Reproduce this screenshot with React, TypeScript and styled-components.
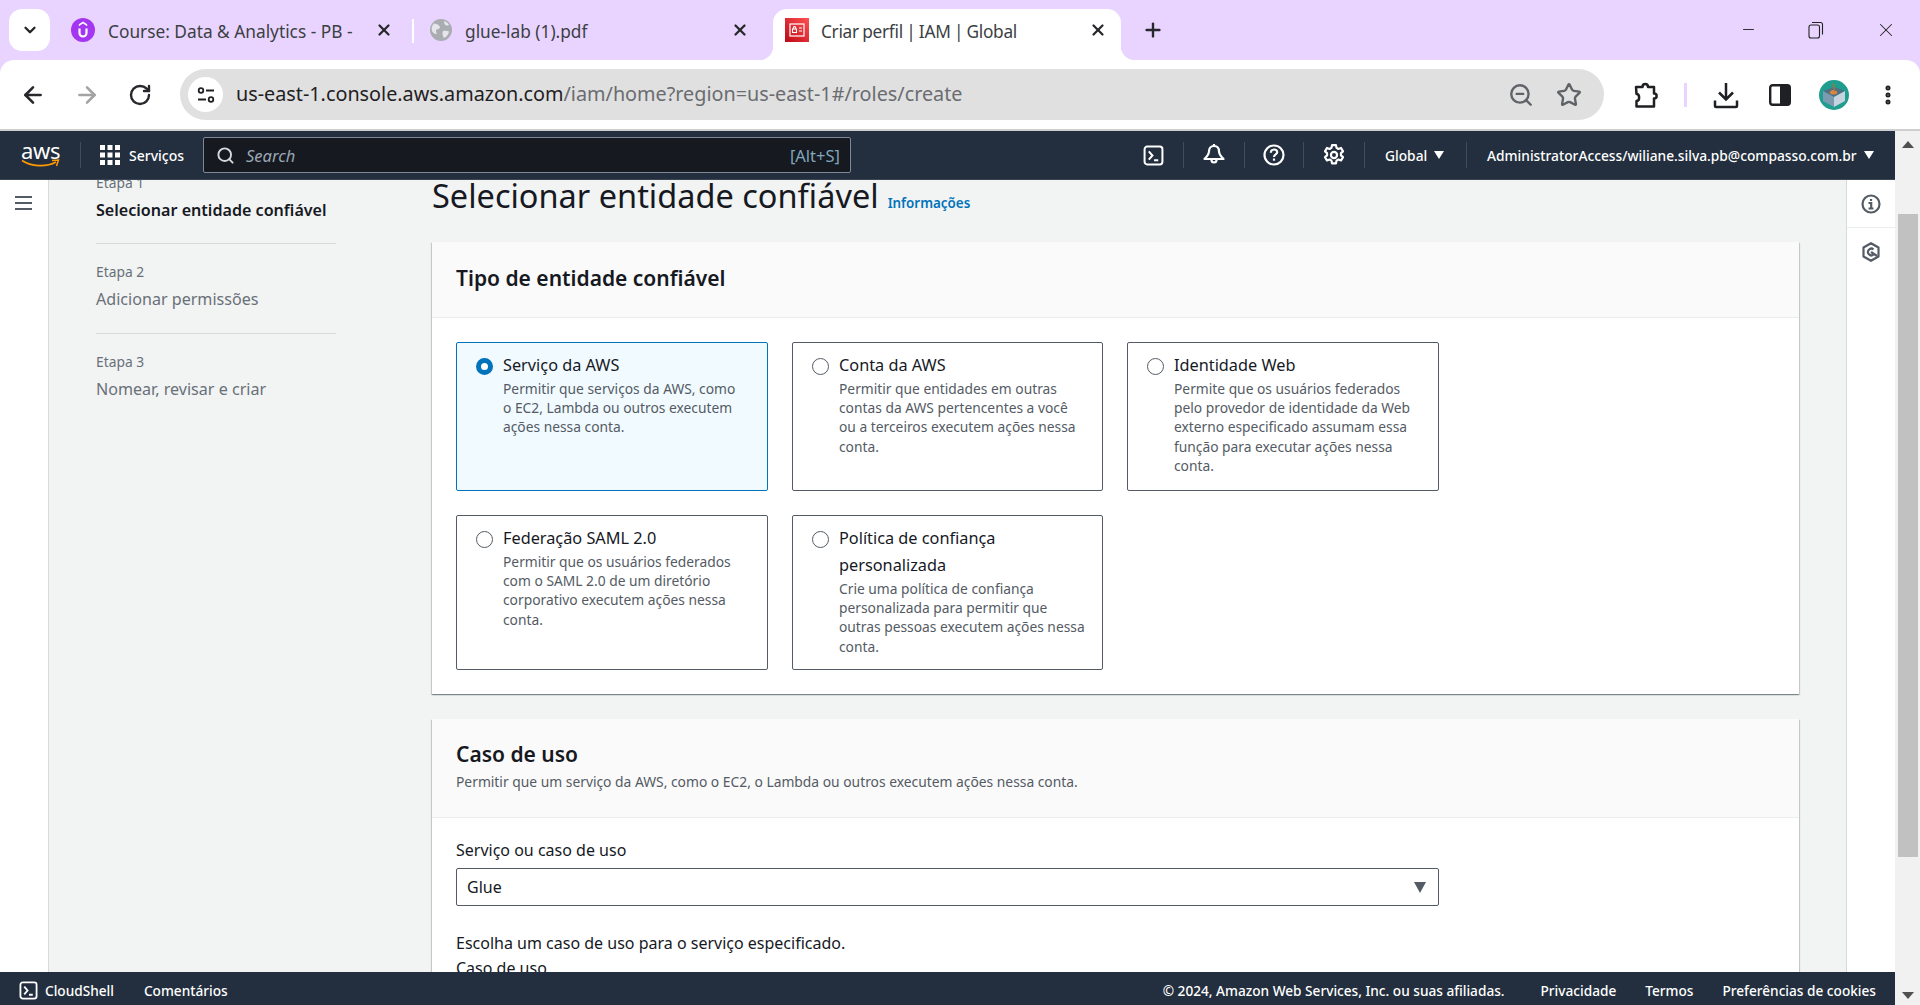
import styled, { createGlobalStyle } from "styled-components";
import { ArrowLeft, ArrowRight, RotateCw, ZoomOut, Star, X, Plus, ChevronDown, Search, Minus, EllipsisVertical } from "lucide-react";

const GlobalStyle = createGlobalStyle`
  html, body {
    margin: 0;
    padding: 0;
    overflow: hidden;
    background: #fff;
  }
  * {
    box-sizing: border-box;
  }
`;

const FONT = `"Noto Sans", "Open Sans", sans-serif`;

const Window = styled.div`
  width: 1920px;
  height: 1005px;
  display: flex;
  flex-direction: column;
  overflow: hidden;
  background: #e8d4ff;
  font-family: ${FONT};
  color: #16191f;
`;

const TabStrip = styled.div`
  height: 60px;
  flex: none;
  display: flex;
  align-items: flex-end;
  padding-left: 9px;
`;

const TabSearchButton = styled.div`
  width: 41px;
  height: 42px;
  margin-bottom: 9px;
  margin-right: 9px;
  background: #fff;
  border-radius: 13px;
  display: flex;
  align-items: center;
  justify-content: center;
`;

const Tab = styled.div<{ $active?: boolean; $width: number; $padLeft: number; $padRight: number }>`
  position: relative;
  width: ${(p) => p.$width}px;
  height: 51px;
  flex: none;
  display: flex;
  align-items: center;
  padding: 0 ${(p) => p.$padRight}px 9px ${(p) => p.$padLeft}px;
  background: ${(p) => (p.$active ? "#fff" : "transparent")};
  border-radius: 14px 14px 0 0;
  font-size: 17.3px;
  color: #3c3f43;

  ${(p) =>
    p.$active
      ? `
    &::before, &::after {
      content: "";
      position: absolute;
      bottom: 0;
      width: 14px;
      height: 14px;
      background: radial-gradient(circle at 0 0, transparent 14px, #fff 14.5px);
    }
    &::before { left: -14px; }
    &::after { right: -14px; background: radial-gradient(circle at 100% 0, transparent 14px, #fff 14.5px); }
  `
      : ""}
`;

const TabTitle = styled.span<{ $gap: number; $tight?: boolean }>`
  flex: 1;
  margin-left: ${(p) => p.$gap}px;
  margin-top: 2px;
  white-space: nowrap;
  overflow: hidden;
  ${(p) => (p.$tight ? "letter-spacing: -0.3px; word-spacing: -0.8px;" : "")}
`;

const TabSeparator = styled.div`
  width: 2px;
  height: 24px;
  flex: none;
  margin-bottom: 17px;
  background: #fff;
`;

const NewTab = styled.div`
  margin-left: 21px;
  height: 51px;
  padding-bottom: 9px;
  display: flex;
  align-items: center;
  color: #26282b;
`;

const WindowControls = styled.div`
  margin-left: auto;
  height: 60px;
  display: flex;
  align-items: center;
  padding-right: 23px;
  gap: 51px;
  padding-bottom: 1px;
  color: #222;
`;

const Toolbar = styled.div`
  height: 69px;
  flex: none;
  display: flex;
  align-items: center;
  background: #fff;
  border-radius: 14px 14px 0 0;
`;

const NavButtons = styled.div`
  width: 180px;
  flex: none;
  display: flex;
  align-items: center;
  padding-left: 20px;
  gap: 28px;
  color: #26282b;
`;

const AddressBar = styled.div`
  width: 1424px;
  height: 51px;
  flex: none;
  display: flex;
  align-items: center;
  padding: 0 22px 0 8px;
  background: #e0e0e0;
  border-radius: 26px;
`;

const SiteInfo = styled.div`
  width: 35px;
  height: 35px;
  flex: none;
  border-radius: 50%;
  background: #fff;
  display: flex;
  align-items: center;
  justify-content: center;
`;

const Url = styled.div`
  margin-left: 13px;
  margin-bottom: 2px;
  flex: 1;
  font-size: 19.8px;
  color: #6a6c70;
  white-space: nowrap;
`;

const UrlHost = styled.span`
  color: #1f2023;
`;

const AddressIcons = styled.div`
  display: flex;
  align-items: center;
  gap: 22px;
  color: #5f6368;
`;

const ToolbarActions = styled.div`
  flex: 1;
  display: flex;
  align-items: center;
  color: #1f2023;
  padding-left: 29px;
`;

const ToolbarSep = styled.div`
  width: 3px;
  height: 24px;
  margin: 0 25px 0 25px;
  background: #e8d4ff;
`;

const PanelSlot = styled.div`
  margin-left: 29px;
  display: flex;
`;

const Avatar = styled.div`
  width: 30px;
  height: 30px;
  margin-left: 28px;
  margin-right: 27px;
  border-radius: 50%;
  overflow: hidden;
  flex: none;
`;

const ChromeLine = styled.div`
  height: 2px;
  flex: none;
  background: #cfcfcf;
`;

const Viewport = styled.div`
  flex: 1;
  min-height: 0;
  display: flex;
`;

const Page = styled.div`
  flex: 1;
  min-width: 0;
  display: flex;
  flex-direction: column;
  background: #f2f3f3;
`;

const TopNav = styled.div`
  height: 49px;
  flex: none;
  display: flex;
  align-items: center;
  background: #232f3e;
  border-bottom: 1px solid #3c4754;
  color: #fff;
  font-size: 14px;
  font-weight: 500;
  white-space: nowrap;
`;

const LogoLink = styled.div`
  width: 80px;
  flex: none;
  display: flex;
  flex-direction: column;
  align-items: flex-start;
  padding-left: 21px;
`;

const LogoText = styled.span`
  font-size: 22px;
  line-height: 17px;
  letter-spacing: -0.3px;
  color: #fff;
  font-weight: 400;
`;

const NavDivider = styled.div`
  width: 1px;
  height: 26px;
  flex: none;
  background: #414d5c;
`;

const ServicesButton = styled.div`
  width: 122px;
  flex: none;
  display: flex;
  align-items: center;
  padding-left: 19px;
  gap: 9px;
`;

const SearchBox = styled.div`
  width: 648px;
  height: 36px;
  flex: none;
  display: flex;
  align-items: center;
  padding: 0 10px 0 12px;
  background: #16191f;
  border: 1px solid #7d8998;
  border-radius: 2px;
`;

const SearchHint = styled.span`
  margin-left: 11px;
  flex: 1;
  font-style: italic;
  font-size: 16.5px;
  font-weight: 400;
  color: #9ba7b6;
`;

const Shortcut = styled.span`
  font-size: 16.5px;
  font-weight: 400;
  color: #7fa6bd;
`;

const NavSpacer = styled.div`
  flex: 1;
`;

const NavIconCell = styled.div`
  width: 60px;
  flex: none;
  display: flex;
  align-items: center;
  justify-content: center;
`;

const NavIconCellNarrow = styled(NavIconCell)`
  width: 58px;
`;

const NavMenu = styled.div<{ $width: number }>`
  width: ${(p) => p.$width}px;
  flex: none;
  display: flex;
  align-items: center;
  padding-left: 20px;
  gap: 7px;
  font-size: 13.75px;
`;

const Caret = styled.span`
  width: 0;
  height: 0;
  border-left: 5.5px solid transparent;
  border-right: 5.5px solid transparent;
  border-top: 8px solid #fff;
`;

const Body = styled.div`
  flex: 1;
  min-height: 0;
  display: flex;
  overflow: hidden;
`;

const SideRail = styled.div`
  width: 49px;
  flex: none;
  background: #fff;
  border-right: 1px solid #d5dbdb;
  padding: 16px 0 0 15px;
`;

const HamburgerLine = styled.div`
  width: 17px;
  height: 2px;
  margin-bottom: 4px;
  background: #545b64;
`;

const Steps = styled.nav`
  width: 383px;
  flex: none;
  padding-left: 47px;
  margin-top: -6px;
`;

const Step = styled.div<{ $last?: boolean }>`
  width: 240px;
  height: 90px;
  border-bottom: ${(p) => (p.$last ? "none" : "1px solid #d5dbdb")};
  padding-top: 19px;
`;

const StepFirst = styled(Step)`
  height: 70px;
  padding-top: 0;
`;

const StepLabel = styled.div`
  font-size: 13.8px;
  line-height: 18px;
  color: #687078;
`;

const StepName = styled.div<{ $current?: boolean }>`
  margin-top: 7px;
  font-size: 16.1px;
  line-height: 22px;
  font-weight: ${(p) => (p.$current ? 600 : 400)};
  color: ${(p) => (p.$current ? "#16191f" : "#687078")};
  white-space: nowrap;
`;

const Main = styled.main`
  width: 1367px;
  flex: none;
  margin-top: -8px;
`;

const TitleRow = styled.div`
  height: 70px;
  display: flex;
  align-items: baseline;
  gap: 9px;
  padding-top: 2px;
`;

const PageTitle = styled.h1`
  margin: 0;
  font-size: 32.5px;
  line-height: 44px;
  font-weight: 400;
  color: #16191f;
  white-space: nowrap;
`;

const InfoLink = styled.a`
  font-size: 13.4px;
  font-weight: 600;
  color: #0073bb;
`;

const Card = styled.section`
  background: #fff;
  box-shadow: 0 1px 1px 0 rgba(0, 28, 36, 0.3), 1px 1px 1px 0 rgba(0, 28, 36, 0.15), -1px 1px 1px 0 rgba(0, 28, 36, 0.15);
  margin-bottom: 25px;
`;

const CardHeader = styled.header<{ $height: number; $lift: number }>`
  height: ${(p) => p.$height}px;
  background: #fafafa;
  border-bottom: 1px solid #eaeded;
  padding: 0 24px ${(p) => p.$lift}px;
  display: flex;
  flex-direction: column;
  justify-content: center;
`;

const CardTitle = styled.h2`
  margin: 0;
  font-size: 21px;
  line-height: 28px;
  font-weight: 600;
  color: #16191f;
`;

const CardSubtitle = styled.p`
  margin: 4px 0 0;
  font-size: 13.84px;
  line-height: 20px;
  color: #545b64;
`;

const CardBody = styled.div`
  padding: 24px;
`;

const FieldsBody = styled(CardBody)`
  padding-top: 21px;
`;

const TileGrid = styled.div`
  display: grid;
  grid-template-columns: 312px 311px 312px;
  grid-template-rows: 149px 155px;
  gap: 24px;
`;

const Tile = styled.div<{ $selected?: boolean }>`
  display: flex;
  padding: 9px 8px 8px 19px;
  border: 1px solid ${(p) => (p.$selected ? "#0073bb" : "#545b64")};
  border-radius: 2px;
  background: ${(p) => (p.$selected ? "#f1faff" : "#fff")};
`;

const Radio = styled.span<{ $selected?: boolean }>`
  width: 17px;
  height: 17px;
  flex: none;
  margin-top: 6px;
  border-radius: 50%;
  border: ${(p) => (p.$selected ? "5px solid #0073bb" : "1.5px solid #545b64")};
  background: #fff;
`;

const TileText = styled.div`
  margin-left: 10px;
  min-width: 0;
`;

const TileTitle = styled.div`
  font-size: 16.3px;
  line-height: 27px;
  color: #16191f;
  white-space: pre-line;
`;

const TileDescription = styled.div`
  font-size: 13.8px;
  line-height: 19.2px;
  color: #545b64;
  white-space: pre;
`;

const FieldLabel = styled.div`
  font-size: 16px;
  line-height: 22px;
  color: #16191f;
`;

const Select = styled.div`
  width: 983px;
  height: 38px;
  margin-top: 7px;
  display: flex;
  align-items: center;
  justify-content: space-between;
  padding: 0 12px 0 10px;
  border: 1px solid #545b64;
  border-radius: 2px;
  font-size: 16px;
  background: #fff;
`;

const SelectCaret = styled.span`
  width: 0;
  height: 0;
  border-left: 6.5px solid transparent;
  border-right: 6.5px solid transparent;
  border-top: 11px solid #545b64;
`;

const FieldHelp = styled.div`
  margin-top: 26px;
  font-size: 16px;
  line-height: 22px;
`;

const FieldSub = styled.div`
  margin-top: 3px;
  font-size: 16px;
  line-height: 22px;
`;

const ToolsPanel = styled.aside`
  width: 49px;
  flex: none;
  margin-left: auto;
  background: #fff;
  border-left: 1px solid #d5dbdb;
`;

const ToolCell = styled.div`
  height: 48px;
  display: flex;
  align-items: center;
  justify-content: center;
  border-bottom: 1px solid #eaeded;
`;

const ToolCellPlain = styled(ToolCell)`
  border-bottom: none;
`;

const Footer = styled.footer`
  height: 33px;
  flex: none;
  display: flex;
  align-items: center;
  position: relative;
  z-index: 1;
  padding: 3px 19px 0;
  background: #232f3e;
  color: #fff;
  font-size: 13.65px;
  font-weight: 500;
  white-space: nowrap;
`;

const FooterLeft = styled.div`
  display: flex;
  align-items: center;
  gap: 7px;
`;

const FooterLink = styled.span<{ $gap: number }>`
  margin-left: ${(p) => p.$gap}px;
`;

const FooterRight = styled.div`
  margin-left: auto;
  display: flex;
  align-items: center;
`;

const Scrollbar = styled.div`
  width: 25px;
  flex: none;
  display: flex;
  flex-direction: column;
  align-items: center;
  background: #f1f1f1;
`;

const ScrollArrow = styled.span<{ $down?: boolean }>`
  width: 0;
  height: 0;
  flex: none;
  border-left: 6px solid transparent;
  border-right: 6px solid transparent;
  ${(p) => (p.$down ? "border-top: 7px solid #505050;" : "border-bottom: 7px solid #505050;")}
`;

const ScrollUpSlot = styled.div`
  height: 83px;
  flex: none;
  display: flex;
  justify-content: center;
  padding-top: 10px;
`;

const ScrollThumb = styled.div`
  width: 20px;
  height: 643px;
  flex: none;
  background: #c1c1c1;
`;

const ScrollDownSlot = styled.div`
  flex: 1;
  display: flex;
  align-items: flex-end;
  padding-bottom: 6px;
`;

function UdemyIcon() {
  return (
    <svg width="24" height="24" viewBox="0 0 24 24">
      <circle cx="12" cy="12" r="12" fill="#a435f0" />
      <path d="M8.5 10.5v4.500a3.500 3.500 0 0 0 7 0v-4.500" fill="none" stroke="#fff" strokeWidth="2.200" />
      <path d="M12 3.600 7.800 6.200v2L12 5.600l4.200 2.600v-2z" fill="#fff" />
    </svg>
  );
}

function GlobeIcon() {
  return (
    <svg width="22" height="22" viewBox="0 0 22 22">
      <circle cx="11" cy="11" r="11" fill="#a9adb1" />
      <path d="M4 4.500c3 .3 5 1.500 6 3.500 0 2-2 2-3.500 2.500-1 1-.5 3 .5 4.500-2 .5-4-1-5-3C1 9 2 6.500 4 4.500zM14 2c2 .5 4 2 5 4-1.500 1-3.500 .5-4.500-1zM13 12c2-.5 4-.5 6 .5-.5 3-2.500 5.500-5 6.500-1.500-2-2-5-1-7z" fill="#f1eef6" opacity="0.85" />
    </svg>
  );
}

function IamIcon() {
  return (
    <svg width="24" height="24" viewBox="0 0 24 24">
      <defs>
        <linearGradient id="iamGrad" x1="0" y1="1" x2="1" y2="0">
          <stop offset="0" stopColor="#bd0816" />
          <stop offset="1" stopColor="#ff5252" />
        </linearGradient>
      </defs>
      <rect width="24" height="24" fill="url(#iamGrad)" />
      <rect x="5" y="6" width="14" height="12" fill="none" stroke="#fff" strokeWidth="1.200" />
      <rect x="7.500" y="11" width="4" height="3.500" fill="none" stroke="#fff" strokeWidth="1.100" />
      <path d="M8.300 11V9.800a1.200 1.200 0 0 1 2.400 0V11M14 10h3M14 13h3" fill="none" stroke="#fff" strokeWidth="1.100" />
    </svg>
  );
}

function SiteSettingsIcon() {
  return (
    <svg width="20" height="20" viewBox="0 0 20 20" fill="none" stroke="#1f2023" strokeWidth="1.800">
      <circle cx="5" cy="5.500" r="2.300" />
      <path d="M10 5.500h8M2 14.500h8" />
      <circle cx="15" cy="14.500" r="2.300" />
    </svg>
  );
}

function RestoreIcon() {
  return (
    <svg width="16" height="18" viewBox="0 0 16 18" fill="none" stroke="#222" strokeWidth="1.100">
      <rect x="1" y="4" width="10.500" height="13" rx="2" />
      <path d="M4 1.500h8.500a2 2 0 0 1 2 2v10" />
    </svg>
  );
}

function ExtensionIcon() {
  return (
    <svg width="26" height="28" viewBox="0 0 26 28" fill="none" stroke="#1f2023" strokeWidth="2.500" strokeLinejoin="round">
      <path d="M3 6h6.500c0-4 5.500-4 5.500 0h6v6.500c3.500 0 3.500 5 0 5V25.500H3.500V20c3.500 0 3.500-7 0-7z" />
    </svg>
  );
}

function DownloadIcon() {
  return (
    <svg width="28" height="28" viewBox="0 0 28 28" fill="none" stroke="#1f2023" strokeWidth="2.500">
      <path d="M14 2v16M7 11.500l7 7 7-7" />
      <path d="M3 19.500v5.500a1 1 0 0 0 1 1h20a1 1 0 0 0 1-1v-5.500" />
    </svg>
  );
}

function SidePanelIcon() {
  return (
    <svg width="22" height="24" viewBox="0 0 22 24">
      <rect x="1.200" y="2.200" width="19.600" height="19.600" rx="2.500" fill="none" stroke="#1f2023" strokeWidth="2.400" />
      <rect x="11" y="2" width="10" height="20" rx="1.500" fill="#1f2023" />
    </svg>
  );
}

function ProfilePicture() {
  return (
    <svg width="30" height="30" viewBox="0 0 30 30">
      <rect width="30" height="30" fill="#1f9e8f" />
      <path d="M4 11 15 7l11 4-11 6z" fill="#4f6f85" />
      <path d="M15 17l11-6v10l-11 6z" fill="#c6d3de" />
      <path d="M4 11l11 6v10L4 21z" fill="#7d9bb0" />
      <path d="M10.500 13c1-2.500 3-3.500 5-2.500 2 0 3.500 1 2.500 3-2 1.500-5 1.500-7.500-.5z" fill="#d8873d" />
      <path d="M14.500 3.500l1 8" stroke="#b96f2e" strokeWidth="1.400" />
    </svg>
  );
}

function AwsSmile() {
  return (
    <svg width="39" height="9" viewBox="0 0 39 9" fill="none">
      <path d="M1 1.500C10 7.500 25 8.500 35 3" stroke="#f90" strokeWidth="1.700" />
      <path d="M31 1.500 37.500 1 35.500 7" stroke="#f90" strokeWidth="1.500" />
    </svg>
  );
}

function GridIcon() {
  return (
    <svg width="20" height="20" viewBox="0 0 20 20" fill="#fff">
      {[0, 7.5, 15].map((y) =>
        [0, 7.5, 15].map((x) => <rect key={`${x}-${y}`} x={x} y={y} width="5" height="5" />)
      )}
    </svg>
  );
}

function ShellIcon({ size }: { size: number }) {
  return (
    <svg width={size} height={size} viewBox="0 0 20 20" fill="none" stroke="#fff" strokeWidth="1.900">
      <rect x="1.500" y="1.500" width="17" height="17" rx="2.500" />
      <path d="M5.500 6l3.500 4-3.500 4M10.500 14.500h4" />
    </svg>
  );
}

function BellIcon() {
  return (
    <svg width="22" height="24" viewBox="0 0 22 24" fill="none" stroke="#fff" strokeWidth="2.200">
      <path d="M11 3c3.500 0 5 2.500 5 5.500 0 3 2.500 5.500 4.500 7.500h-19C3.500 14 6 11.500 6 8.500 6 5.500 7.500 3 11 3z" strokeLinejoin="round" />
      <path d="M8.500 17a2.500 2.500 0 0 0 5 0" />
      <path d="M11 1v2" />
    </svg>
  );
}

function HelpIcon() {
  return (
    <svg width="22" height="22" viewBox="0 0 22 22" fill="none" stroke="#fff" strokeWidth="2.200">
      <circle cx="11" cy="11" r="9.500" />
      <path d="M7.800 8.800c0-4.300 6.400-4.300 6.400-.5 0 2.200-3.200 2.200-3.200 4.700" />
      <path d="M11 14.500v2.200" />
    </svg>
  );
}

function GearIcon() {
  return (
    <svg width="22" height="22" viewBox="0 0 20 20" fill="none" stroke="#fff" strokeWidth="2" strokeLinejoin="round">
      <path d="M8.200 1h3.600l.5 2.500 1.700 1 2.400-.9 1.800 3.100-1.900 1.600v2l1.900 1.600-1.800 3.100-2.400-.9-1.700 1-.5 2.500H8.200l-.5-2.500-1.700-1-2.400.9-1.800-3.100 1.900-1.600v-2L1.800 6.700l1.800-3.100 2.400.9 1.700-1z" />
      <circle cx="10" cy="10" r="2.800" />
    </svg>
  );
}

function InfoIcon() {
  return (
    <svg width="20" height="20" viewBox="0 0 20 20" fill="none" stroke="#545b64" strokeWidth="2.200">
      <circle cx="10" cy="10" r="8.500" />
      <path d="M7.500 9h2.700v5.500M7.500 14.500h5M10 5v2" />
    </svg>
  );
}

function HexIcon() {
  return (
    <svg width="18" height="20" viewBox="0 0 18 20" fill="none" stroke="#545b64" strokeWidth="2.200" strokeLinejoin="round">
      <path d="M9 1.200 16.500 5.500v9L9 18.800 1.500 14.500v-9z" />
      <path d="M11.500 7.500a3.300 3.300 0 1 0 0 5" />
      <path d="M9 10l6 4" />
    </svg>
  );
}

const tiles = [
  {
    title: "Serviço da AWS",
    text: "Permitir que serviços da AWS, como\no EC2, Lambda ou outros executem\nações nessa conta.",
    selected: true,
  },
  {
    title: "Conta da AWS",
    text: "Permitir que entidades em outras\ncontas da AWS pertencentes a você\nou a terceiros executem ações nessa\nconta.",
  },
  {
    title: "Identidade Web",
    text: "Permite que os usuários federados\npelo provedor de identidade da Web\nexterno especificado assumam essa\nfunção para executar ações nessa\nconta.",
  },
  {
    title: "Federação SAML 2.0",
    text: "Permitir que os usuários federados\ncom o SAML 2.0 de um diretório\ncorporativo executem ações nessa\nconta.",
  },
  {
    title: "Política de confiança\npersonalizada",
    text: "Crie uma política de confiança\npersonalizada para permitir que\noutras pessoas executem ações nessa\nconta.",
  },
];

export default function App() {
  return (
    <>
      <GlobalStyle />
      <Window>
        <TabStrip>
          <TabSearchButton>
            <ChevronDown size={18} strokeWidth={3} color="#222" />
          </TabSearchButton>
          <Tab $width={353} $padLeft={12} $padRight={19}>
            <UdemyIcon />
            <TabTitle $gap={13}>Course: Data &amp; Analytics - PB -</TabTitle>
            <X size={18} strokeWidth={3} color="#26282b" />
          </Tab>
          <TabSeparator />
          <Tab $width={359} $padLeft={16} $padRight={24}>
            <GlobeIcon />
            <TabTitle $gap={13}>glue-lab (1).pdf</TabTitle>
            <X size={18} strokeWidth={3} color="#26282b" />
          </Tab>
          <Tab $active $width={348} $padLeft={12} $padRight={14}>
            <IamIcon />
            <TabTitle $gap={12} $tight>Criar perfil | IAM | Global</TabTitle>
            <X size={18} strokeWidth={3} color="#26282b" />
          </Tab>
          <NewTab>
            <Plus size={22} strokeWidth={2.6} />
          </NewTab>
          <WindowControls>
            <Minus size={17} strokeWidth={1.3} />
            <RestoreIcon />
            <X size={22} strokeWidth={1.1} />
          </WindowControls>
        </TabStrip>
        <Toolbar>
          <NavButtons>
            <ArrowLeft size={26} strokeWidth={2.4} />
            <ArrowRight size={26} strokeWidth={2.4} color="#a3a3a3" />
            <RotateCw size={24} strokeWidth={2.4} />
          </NavButtons>
          <AddressBar>
            <SiteInfo>
              <SiteSettingsIcon />
            </SiteInfo>
            <Url>
              <UrlHost>us-east-1.console.aws.amazon.com</UrlHost>/iam/home?region=us-east-1#/roles/create
            </Url>
            <AddressIcons>
              <ZoomOut size={26} strokeWidth={2.2} />
              <Star size={26} strokeWidth={2.2} />
            </AddressIcons>
          </AddressBar>
          <ToolbarActions>
            <ExtensionIcon />
            <ToolbarSep />
            <DownloadIcon />
            <PanelSlot>
              <SidePanelIcon />
            </PanelSlot>
            <Avatar>
              <ProfilePicture />
            </Avatar>
            <EllipsisVertical size={24} strokeWidth={3} />
          </ToolbarActions>
        </Toolbar>
        <ChromeLine />
        <Viewport>
          <Page>
            <TopNav>
              <LogoLink>
                <LogoText>aws</LogoText>
                <AwsSmile />
              </LogoLink>
              <NavDivider />
              <ServicesButton>
                <GridIcon />
                Serviços
              </ServicesButton>
              <SearchBox>
                <Search size={19} strokeWidth={2.4} color="#d5dbdb" />
                <SearchHint>Search</SearchHint>
                <Shortcut>[Alt+S]</Shortcut>
              </SearchBox>
              <NavSpacer />
              <NavIconCell>
                <ShellIcon size={21} />
              </NavIconCell>
              <NavDivider />
              <NavIconCell>
                <BellIcon />
              </NavIconCell>
              <NavDivider />
              <NavIconCellNarrow>
                <HelpIcon />
              </NavIconCellNarrow>
              <NavDivider />
              <NavIconCell>
                <GearIcon />
              </NavIconCell>
              <NavDivider />
              <NavMenu $width={101}>
                Global
                <Caret />
              </NavMenu>
              <NavDivider />
              <NavMenu $width={428}>
                AdministratorAccess/wiliane.silva.pb@compasso.com.br
                <Caret />
              </NavMenu>
            </TopNav>
            <Body>
              <SideRail>
                <HamburgerLine />
                <HamburgerLine />
                <HamburgerLine />
              </SideRail>
              <Steps>
                <StepFirst>
                  <StepLabel>Etapa 1</StepLabel>
                  <StepName $current>Selecionar entidade confiável</StepName>
                </StepFirst>
                <Step>
                  <StepLabel>Etapa 2</StepLabel>
                  <StepName>Adicionar permissões</StepName>
                </Step>
                <Step $last>
                  <StepLabel>Etapa 3</StepLabel>
                  <StepName>Nomear, revisar e criar</StepName>
                </Step>
              </Steps>
              <Main>
                <TitleRow>
                  <PageTitle>Selecionar entidade confiável</PageTitle>
                  <InfoLink>Informações</InfoLink>
                </TitleRow>
                <Card>
                  <CardHeader $height={76} $lift={4}>
                    <CardTitle>Tipo de entidade confiável</CardTitle>
                  </CardHeader>
                  <CardBody>
                    <TileGrid>
                      {tiles.map((tile) => (
                        <Tile key={tile.title} $selected={tile.selected}>
                          <Radio $selected={tile.selected} />
                          <TileText>
                            <TileTitle>{tile.title}</TileTitle>
                            <TileDescription>{tile.text}</TileDescription>
                          </TileText>
                        </Tile>
                      ))}
                    </TileGrid>
                  </CardBody>
                </Card>
                <Card>
                  <CardHeader $height={99} $lift={4}>
                    <CardTitle>Caso de uso</CardTitle>
                    <CardSubtitle>
                      Permitir que um serviço da AWS, como o EC2, o Lambda ou outros executem ações nessa conta.
                    </CardSubtitle>
                  </CardHeader>
                  <FieldsBody>
                    <FieldLabel>Serviço ou caso de uso</FieldLabel>
                    <Select>
                      Glue
                      <SelectCaret />
                    </Select>
                    <FieldHelp>Escolha um caso de uso para o serviço especificado.</FieldHelp>
                    <FieldSub>Caso de uso</FieldSub>
                  </FieldsBody>
                </Card>
              </Main>
              <ToolsPanel>
                <ToolCell>
                  <InfoIcon />
                </ToolCell>
                <ToolCellPlain>
                  <HexIcon />
                </ToolCellPlain>
              </ToolsPanel>
            </Body>
            <Footer>
              <FooterLeft>
                <ShellIcon size={19} />
                CloudShell
              </FooterLeft>
              <FooterLink $gap={30}>Comentários</FooterLink>
              <FooterRight>
                © 2024, Amazon Web Services, Inc. ou suas afiliadas.
                <FooterLink $gap={36}>Privacidade</FooterLink>
                <FooterLink $gap={29}>Termos</FooterLink>
                <FooterLink $gap={29}>Preferências de cookies</FooterLink>
              </FooterRight>
            </Footer>
          </Page>
          <Scrollbar>
            <ScrollUpSlot>
              <ScrollArrow />
            </ScrollUpSlot>
            <ScrollThumb />
            <ScrollDownSlot>
              <ScrollArrow $down />
            </ScrollDownSlot>
          </Scrollbar>
        </Viewport>
      </Window>
    </>
  );
}
